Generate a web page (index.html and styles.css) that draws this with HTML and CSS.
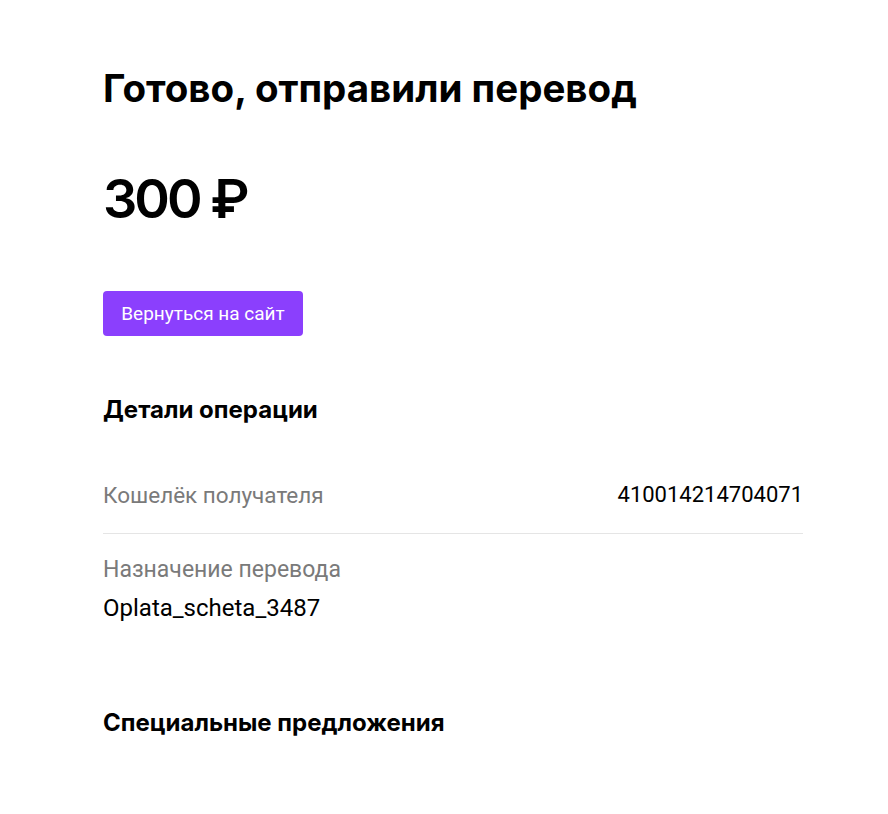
FILE: index.html
```html
<!doctype html>
<html lang="ru">
  <head>
    <meta charset="UTF-8" />
    <title>Готово, отправили перевод</title>
    <link rel="stylesheet" href="styles.css">
  </head>
  <body>
    <div class="page">
      <h1 class="title">Готово, отправили перевод</h1>
      <div class="amount">300 ₽</div>
      <a class="back-button" href="#">Вернуться на сайт</a>

      <section class="details">
        <h2 class="section-title">Детали операции</h2>
        <div class="detail-row">
          <span class="detail-label">Кошелёк получателя</span>
          <span class="detail-value">410014214704071</span>
        </div>
        <div class="detail-block">
          <div class="detail-label">Назначение перевода</div>
          <div class="detail-value">Oplata_scheta_3487</div>
        </div>
      </section>

      <section class="offers">
        <h2 class="section-title">Специальные предложения</h2>
      </section>
    </div>
  </body>
</html>
```

FILE: styles.css
```css
body {
  margin: 0;
  padding: 0;
  font-family: Inter, "Noto Sans", sans-serif;
  color: #000;
  background: #fff;
  -webkit-font-smoothing: antialiased;
}

.page {
  width: 700px;
  padding: 62px 0 0 103px;
}

.title {
  margin: 0;
  font-size: 38.5px;
  line-height: 52px;
  font-weight: 700;
}

.amount {
  margin-top: 53px;
  font-size: 54px;
  line-height: 64px;
  font-weight: 600;
  letter-spacing: -3px;
}

.back-button {
  display: inline-block;
  margin-top: 60px;
  width: 200px;
  height: 45px;
  line-height: 45px;
  text-align: center;
  background: #8b3ffd;
  color: #fff;
  border-radius: 4px;
  font-family: Roboto, sans-serif;
  font-size: 19px;
  text-decoration: none;
}

.details {
  margin-top: 59px;
}

.section-title {
  margin: 0;
  font-size: 24px;
  line-height: 30px;
  font-weight: 700;
}

.detail-row {
  display: flex;
  justify-content: space-between;
  align-items: center;
  margin-top: 56px;
  padding-bottom: 24px;
  border-bottom: 1px solid #e5e5e5;
}

.detail-row,
.detail-block {
  font-family: Roboto, sans-serif;
  font-size: 23px;
  line-height: 28px;
}

.detail-row .detail-label {
  font-size: 22.5px;
}

.detail-row .detail-value {
  font-size: 22px;
}

.detail-block {
  padding-top: 22px;
}

.detail-block .detail-value {
  margin-top: 10px;
  font-size: 24px;
}

.detail-label {
  color: #7a7a7a;
}

.detail-value {
  color: #000;
}

.offers {
  margin-top: 86px;
}
```
